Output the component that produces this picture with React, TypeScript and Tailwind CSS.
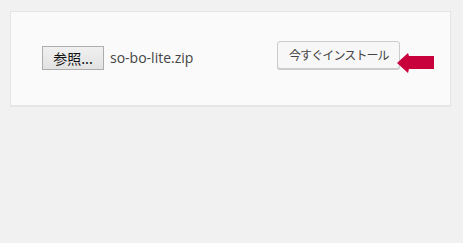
const App = () => {
  return (
    <div className="min-h-[243px] w-[463px] bg-[#f1f1f1] pt-[11px] pl-[10px]">
      <div className="relative h-[95px] w-[441px] border border-[#e5e5e5] bg-[#fafafa] shadow-[0_1px_1px_rgba(0,0,0,0.04)]">
        <div className="flex items-start pl-[31px] pt-[29px]">
          <button className="mt-[5px] flex h-[24px] w-[62px] items-center justify-center border border-[#adadad] bg-gradient-to-b from-[#f0f0f0] to-[#e2e2e2] text-[14px] leading-none text-[#111] [font-family:'Noto_Sans_CJK_JP',sans-serif]">
            参照...
          </button>
          <span className="ml-[6px] mt-[6px] text-[14px] leading-[22px] text-[#444] [font-family:'Open_Sans',sans-serif]">
            so-bo-lite.zip
          </span>
          <button className="ml-[84px] flex h-[28px] w-[123px] items-center justify-center rounded-[3px] border border-[#cccccc] bg-[#f7f7f7] text-[12px] leading-none tracking-[-0.9px] text-[#444] shadow-[0_1px_0_#cccccc] [font-family:'Noto_Sans_CJK_JP',sans-serif]">
            今すぐインストール
          </button>
        </div>
        <svg
          className="absolute left-[386px] top-[40px]"
          width="38"
          height="24"
          viewBox="0 0 38 24"
        >
          <polygon
            points="0,11 11,1 12,4 37,4 37,17 12,17 11,21"
            fill="#c8003c"
          />
        </svg>
      </div>
    </div>
  );
};

export default App;
